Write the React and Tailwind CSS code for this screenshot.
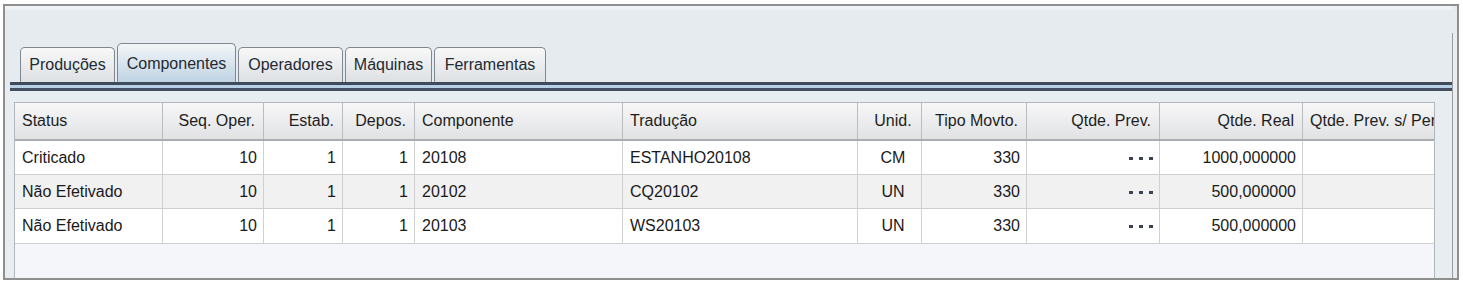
import React from "react";

const cols = [
  { label: "Status", align: "left" },
  { label: "Seq. Oper.", align: "right" },
  { label: "Estab.", align: "right" },
  { label: "Depos.", align: "right" },
  { label: "Componente", align: "left" },
  { label: "Tradução", align: "left" },
  { label: "Unid.", align: "center" },
  { label: "Tipo Movto.", align: "right" },
  { label: "Qtde. Prev.", align: "right" },
  { label: "Qtde. Real", align: "right" },
  { label: "Qtde. Prev. s/ Perda", align: "left" },
];

const rows = [
  ["Criticado", "10", "1", "1", "20108", "ESTANHO20108", "CM", "330", "dots", "1000,000000", ""],
  ["Não Efetivado", "10", "1", "1", "20102", "CQ20102", "UN", "330", "dots", "500,000000", ""],
  ["Não Efetivado", "10", "1", "1", "20103", "WS20103", "UN", "330", "dots", "500,000000", ""],
];

const alignCls = {
  left: "text-left",
  right: "text-right",
  center: "text-center",
};

const tabs = [
  { label: "Produções", w: "w-[95px]" },
  { label: "Componentes", w: "w-[119px]", active: true },
  { label: "Operadores", w: "w-[105px]" },
  { label: "Máquinas", w: "w-[87px]" },
  { label: "Ferramentas", w: "w-[112px]" },
];

const gridCls =
  "grid grid-cols-[148px_101px_79px_72px_208px_235px_64px_105px_133px_143px_131px]";

function Dots() {
  return (
    <span className="flex h-full items-center justify-end gap-[6px] pt-[1px]">
      <span className="h-[3px] w-[4px] bg-[#3b4352]" />
      <span className="h-[3px] w-[4px] bg-[#3b4352]" />
      <span className="h-[3px] w-[4px] bg-[#3b4352]" />
    </span>
  );
}

export default function App() {
  return (
    <div className="h-[284px] w-[1463px] bg-white pl-[3px] pt-[4px] font-['Liberation_Sans',Arial,sans-serif] text-[16px] text-[#1a1a1a]">
      <div className="flex h-[276px] w-[1456px] border-2 border-[#8f8f8f] bg-[#e6ebef]">
        {/* main column */}
        <div className="flex min-w-0 flex-1 flex-col">
          <div className="h-[4px] bg-[#f0f3f5]" />
          <div className="h-[33px]" />
          {/* tabs */}
          <div className="flex h-[39px] items-end gap-[2px] pl-[15px]">
            {tabs.map((t) =>
              t.active ? (
                <div
                  key={t.label}
                  className={`${t.w} flex h-[39px] items-center justify-center rounded-t-[5px] border border-b-0 border-[#7f8790] bg-gradient-to-b from-[#f3f6f8] to-[#bfd3e3] pt-[1px] text-[#222a33]`}
                >
                  {t.label}
                </div>
              ) : (
                <div
                  key={t.label}
                  className={`${t.w} flex h-[35px] items-center justify-center rounded-t-[5px] border border-b-0 border-[#7f8790] bg-gradient-to-b from-[#f8f8f8] to-[#dde0e3] text-[#222a33]`}
                >
                  {t.label}
                </div>
              )
            )}
          </div>
          {/* double line */}
          <div className="ml-[5px] flex flex-col">
            <div className="h-[3px] bg-[#3f4a5a]" />
            <div className="h-[3px] bg-[#b9d1e6]" />
            <div className="h-[3px] bg-[#444f5f]" />
          </div>
          {/* panel */}
          <div className="flex min-h-0 flex-1 flex-col bg-[#e8edf1] pl-[9px] pt-[11px]">
            <div className="flex w-[1421px] flex-1 flex-col border-x border-t border-[#b3b7bc] bg-[#f5f6fa]">
              {/* header */}
              <div
                className={`${gridCls} h-[38px] border-b-2 border-[#a9adb2] bg-gradient-to-b from-[#f7f7f8] to-[#e1e2e4]`}
              >
                {cols.map((c, i) => (
                  <div
                    key={c.label}
                    className={`${alignCls[c.align]} overflow-hidden whitespace-nowrap ${
                      i < cols.length - 1 ? "border-r border-[#b9bdc1]" : ""
                    } ${c.align === "right" ? "pr-[8px]" : "pl-[7px]"} leading-[36px] text-[#1e1e1e]`}
                  >
                    {c.label}
                  </div>
                ))}
              </div>
              {/* rows */}
              {rows.map((r, ri) => (
                <div
                  key={ri}
                  className={`${gridCls} ${ri === 2 ? "h-[35px]" : "h-[34px]"} border-b border-[#d0d0d0] ${
                    ri === 1 ? "bg-[#f1f1f1]" : "bg-white"
                  }`}
                >
                  {r.map((v, ci) => (
                    <div
                      key={ci}
                      className={`${alignCls[cols[ci].align]} overflow-hidden whitespace-nowrap ${
                        ci < cols.length - 1 ? "border-r border-[#d0d0d0]" : ""
                      } ${cols[ci].align === "right" ? "pr-[6px]" : "pl-[7px]"} leading-[33px]`}
                    >
                      {v === "dots" ? <Dots /> : v}
                    </div>
                  ))}
                </div>
              ))}
            </div>
          </div>
        </div>
        {/* right edge */}
        <div className="flex w-[5px] flex-col">
          <div className="h-[27px]" />
          <div className="flex-1 border-l border-[#9a9ea3] bg-[#e8edf1]" />
        </div>
      </div>
    </div>
  );
}
